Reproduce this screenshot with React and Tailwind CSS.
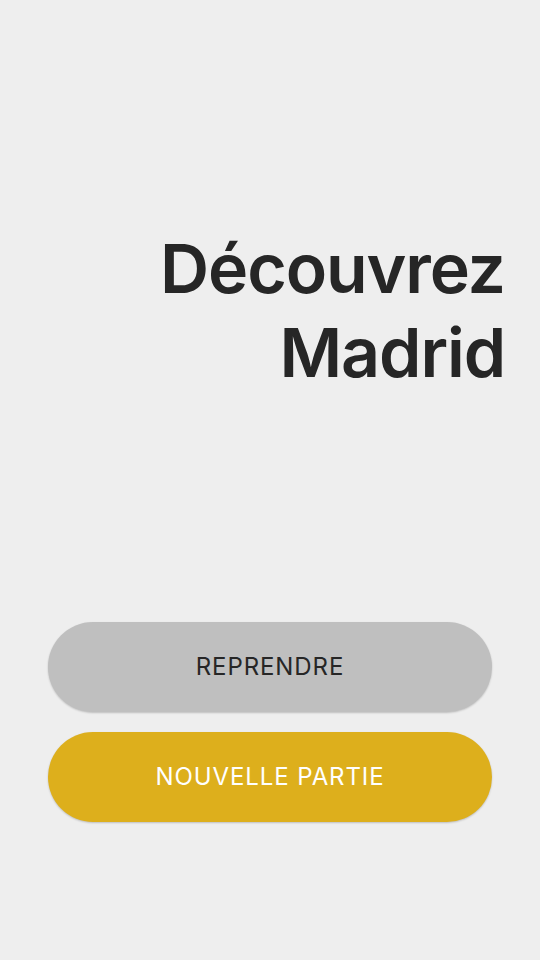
import React from "react";

const App = () => {
  return (
    <div
      className="min-h-[960px] w-full bg-[#eeeeee] flex flex-col px-12"
      style={{ fontFamily: "Inter, 'Noto Sans', sans-serif" }}
    >
      {/* Title */}
      <div className="pt-[226px] -mr-[13px] text-right">
        <h1 className="text-[68px] leading-[84px] font-semibold text-[#262626] tracking-[-1.1px]">
          Découvrez
          <br />
          Madrid
        </h1>
      </div>

      {/* Buttons */}
      <div className="mt-[228px] flex flex-col gap-5">
        <button className="h-[90px] w-full rounded-full bg-[#bfbfbf] text-[#262626] text-[24px] tracking-[0.9px] uppercase shadow-[0_1px_2px_rgba(0,0,0,0.2)]">
          Reprendre
        </button>
        <button className="h-[90px] w-full rounded-full bg-[#ddaf1c] text-white text-[24px] tracking-[0.9px] uppercase shadow-[0_1px_2px_rgba(0,0,0,0.2)]">
          Nouvelle partie
        </button>
      </div>
    </div>
  );
};

export default App;
